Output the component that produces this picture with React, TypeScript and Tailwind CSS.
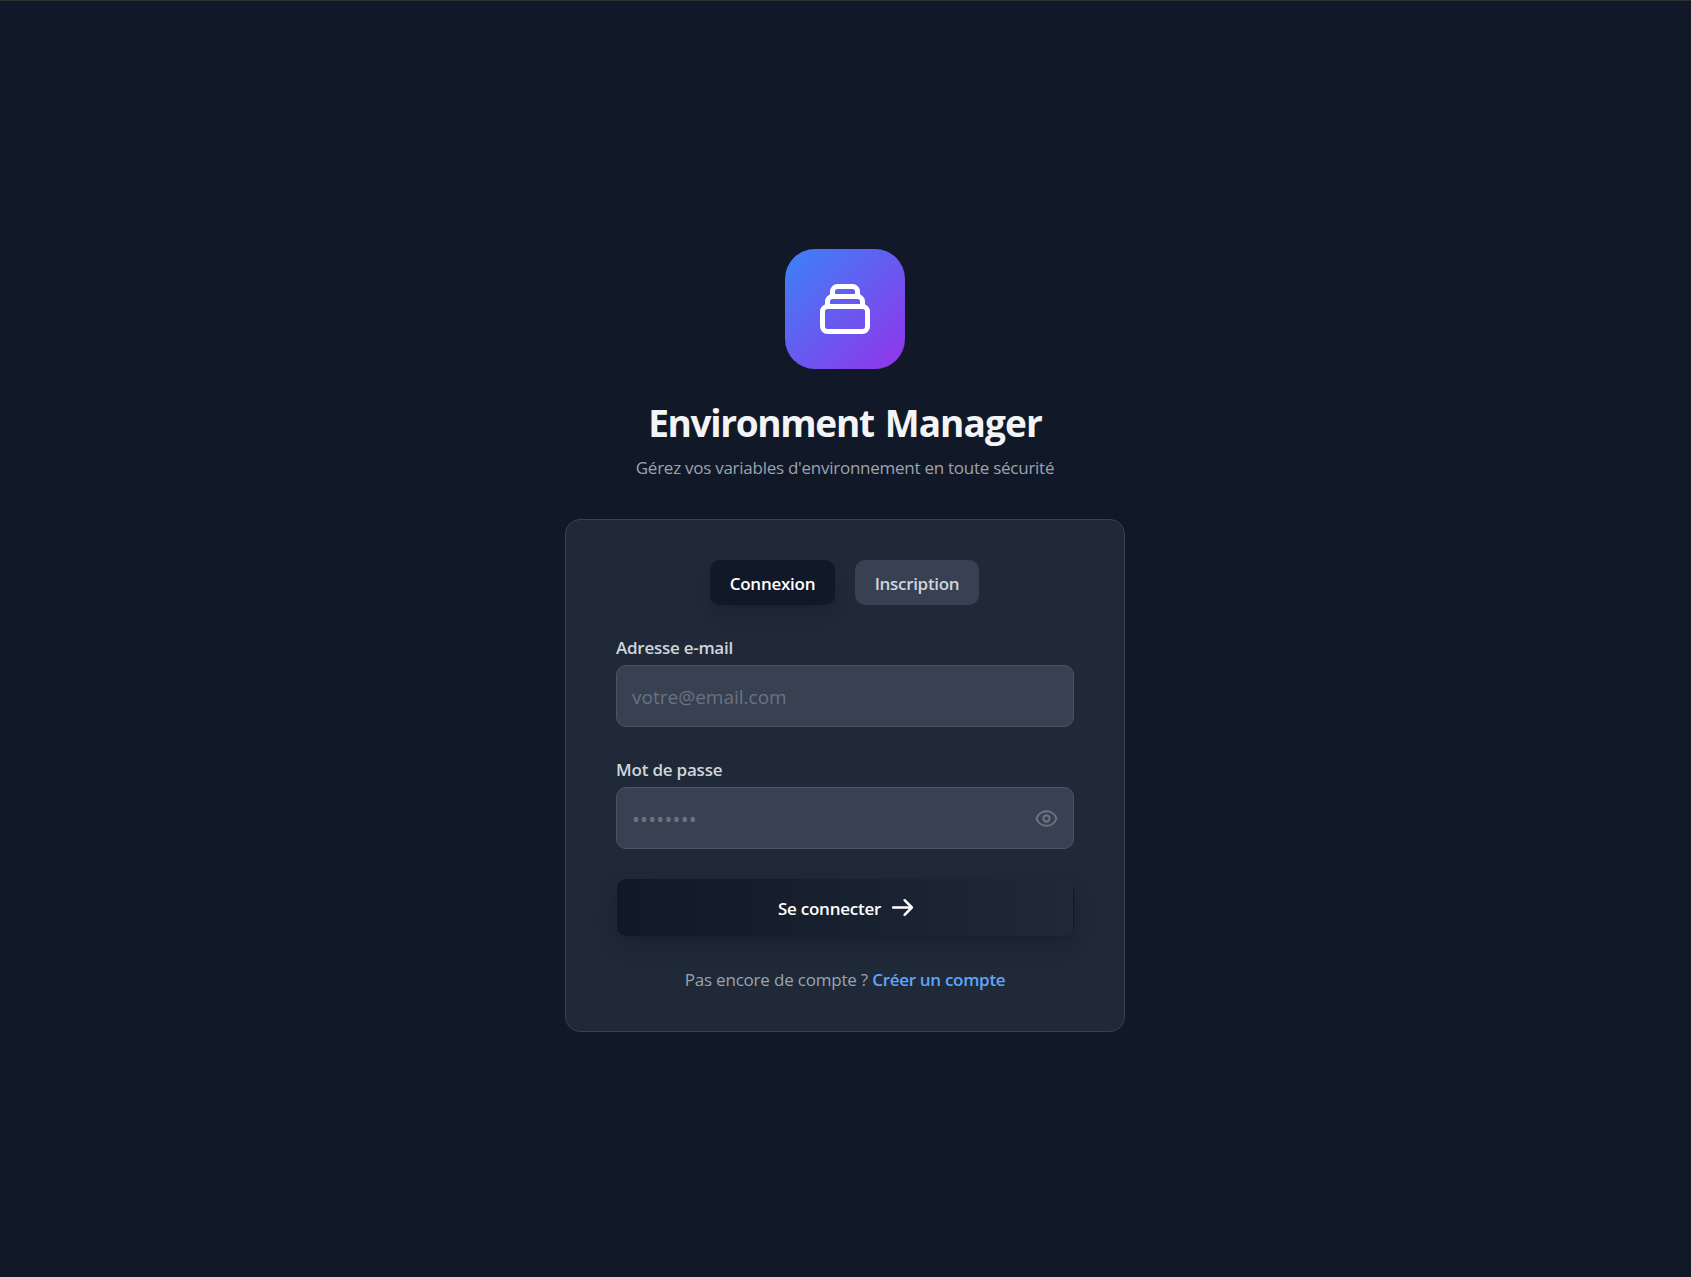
import { useState } from "react";

type IconProps = { d: string[]; className: string; strokeWidth?: number };

function Icon({ d, className, strokeWidth = 2 }: IconProps) {
  return (
    <svg
      className={className}
      viewBox="0 0 24 24"
      fill="none"
      stroke="currentColor"
      strokeWidth={strokeWidth}
      strokeLinecap="round"
      strokeLinejoin="round"
      aria-hidden="true"
    >
      {d.map((p) => (
        <path key={p} d={p} />
      ))}
    </svg>
  );
}

const COLLECTION = [
  "M19 11H5m14 0a2 2 0 012 2v6a2 2 0 01-2 2H5a2 2 0 01-2-2v-6a2 2 0 012-2m14 0V9a2 2 0 00-2-2M5 11V9a2 2 0 012-2m0 0V5a2 2 0 012-2h6a2 2 0 012 2v2M7 7h10",
];
const EYE = [
  "M15 12a3 3 0 11-6 0 3 3 0 016 0z",
  "M2.458 12C3.732 7.943 7.523 5 12 5c4.478 0 8.268 2.943 9.542 7-1.274 4.057-5.064 7-9.542 7-4.477 0-8.268-2.943-9.542-7z",
];
const ARROW = ["M14 5l7 7m0 0l-7 7m7-7H3"];

const INPUT =
  "block h-[62px] w-full rounded-[10px] border border-[#4b5563] bg-[#374151] pl-[15px] text-[19px] text-gray-100 outline-none placeholder:text-[#6b7280] placeholder:opacity-100";

export default function App() {
  const [visible, setVisible] = useState(false);

  return (
    <div className="flex min-h-[1277px] flex-col items-center border-t border-[#303030] bg-[#111827] pt-[248px] pr-px font-['Open_Sans','Noto_Sans',sans-serif] text-[17px] leading-[25px]">
      <div className="flex size-[120px] items-center justify-center rounded-[30px] bg-linear-to-br/srgb from-[#3b82f6] to-[#9333ea]">
        <Icon d={COLLECTION} className="size-[60px] text-white" />
      </div>
      <h1 className="mt-[31px] text-[37px] leading-[46px] font-bold tracking-[-0.9px] whitespace-nowrap text-[#f3f4f6] [word-spacing:2.3px]">
        <span className="tracking-[-1.32px]">Environment</span> Manager
      </h1>
      <p className="mt-[9px] tracking-[-0.26px] whitespace-nowrap text-[#9ca3af]">
        Gérez vos variables d'environnement en toute sécurité
      </p>

      <main className="mt-[39px] w-[560px] rounded-[15px] border border-[#374151] bg-[#1f2937] px-[50px] pt-10 pb-[39px]">
        <div className="flex justify-center gap-5 pr-px font-semibold">
          <button className="h-[45px] w-[125px] rounded-[10px] bg-[#111827] pt-0.5 tracking-[-0.25px] text-white shadow-[0_12.5px_18.75px_-3.75px_rgba(0,0,0,0.1),0_5px_7.5px_-5px_rgba(0,0,0,0.1)]">
            Connexion
          </button>
          <button className="h-[45px] w-[124px] rounded-[10px] bg-[#374151] pt-0.5 tracking-[-0.3px] text-[#d1d5db]">
            Inscription
          </button>
        </div>

        <form className="mt-[30px]" onSubmit={(e) => e.preventDefault()}>
          <label htmlFor="email" className="block font-semibold tracking-[-0.26px] text-[#d1d5db]">
            Adresse e-mail
          </label>
          <div className="mt-[5px]">
            <input id="email" type="email" placeholder="votre@email.com" className={`${INPUT} pt-px`} />
          </div>

          <label htmlFor="password" className="mt-[30px] block font-semibold tracking-[-0.2px] text-[#d1d5db]">
            Mot de passe
          </label>
          <div className="relative mt-[5px]">
            <input
              id="password"
              type={visible ? "text" : "password"}
              placeholder="••••••••"
              className={`${INPUT} pt-[3px] placeholder:text-[21px] placeholder:tracking-[0.22px]`}
            />
            <button
              type="button"
              aria-label="Afficher le mot de passe"
              onClick={() => setVisible(!visible)}
              className="absolute inset-y-0 right-[15px] flex items-center text-[#6b7280]"
            >
              <Icon d={EYE} className="size-[25px]" />
            </button>
          </div>

          <button
            type="submit"
            className="mt-[30px] flex h-[57px] w-full items-center justify-center gap-[9px] rounded-[10px] border border-transparent bg-linear-to-r/srgb from-[#111827] to-[#1f2937] pl-[3px] font-semibold tracking-[-0.25px] text-white shadow-[0_10px_25px_-3px_rgba(0,0,0,0.18),0_5px_7.5px_-5px_rgba(0,0,0,0.1)]"
          >
            <span className="pt-px">Se connecter</span>
            <Icon d={ARROW} className="size-[25px]" strokeWidth={2.4} />
          </button>
        </form>

        <p className="mt-[31px] text-center tracking-[-0.2px] whitespace-nowrap text-[#9ca3af]">
          Pas encore de compte ?{" "}
          <a href="#" className="font-semibold tracking-[-0.3px] text-[#60a5fa]">
            Créer un compte
          </a>
        </p>
      </main>
    </div>
  );
}
